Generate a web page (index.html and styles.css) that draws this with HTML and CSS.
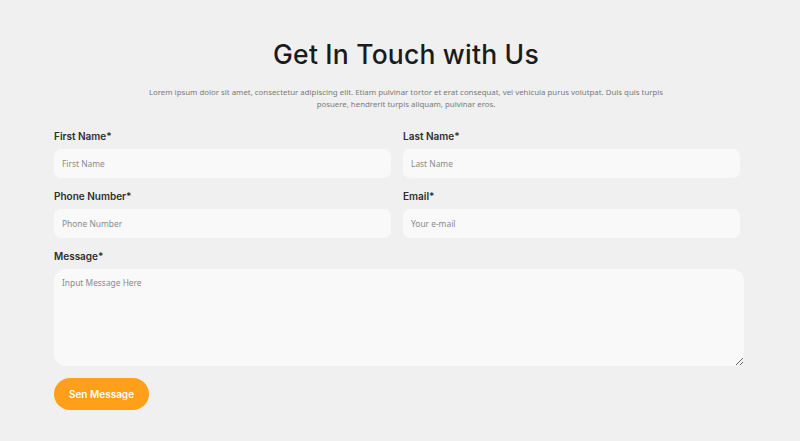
FILE: index.html
```html
<!DOCTYPE html>
<html>
<head>
<meta charset="utf-8">
<link rel="stylesheet" href="styles.css">
</head>
<body>
<section class="contact">
  <header class="head">
    <h1 class="title">Get In Touch with Us</h1>
    <p class="intro">Lorem ipsum dolor sit amet, consectetur adipiscing elit. Etiam pulvinar tortor et erat consequat, vel vehicula purus volutpat. Duis quis turpis posuere, hendrerit turpis aliquam, pulvinar eros.</p>
  </header>
  <form class="form">
    <div class="grid">
      <div class="field">
        <label class="label">First Name*</label>
        <input class="input" type="text" placeholder="First Name">
      </div>
      <div class="field">
        <label class="label">Last Name*</label>
        <input class="input" type="text" placeholder="Last Name">
      </div>
      <div class="field">
        <label class="label">Phone Number*</label>
        <input class="input" type="text" placeholder="Phone Number">
      </div>
      <div class="field">
        <label class="label">Email*</label>
        <input class="input" type="text" placeholder="Your e-mail">
      </div>
    </div>
    <div class="field">
      <label class="label">Message*</label>
      <textarea class="textarea" placeholder="Input Message Here"></textarea>
    </div>
    <button class="btn" type="button">Sen Message</button>
  </form>
</section>
</body>
</html>
```
FILE: styles.css
```css
* { box-sizing: border-box; }
html, body { margin: 0; padding: 0; }
body {
  background: #f0f0f0;
  font-family: "Open Sans", "Liberation Sans", sans-serif;
  width: 800px;
  height: 441px;
  overflow: hidden;
}
.contact {
  padding: 38px 54px 0 54px;
}
.head {
  padding-left: 12px;
}
.title {
  margin: 0;
  text-align: center;
  font-family: Inter, "Liberation Sans", sans-serif;
  font-weight: 500;
  font-size: 26.5px;
  line-height: 32px;
  color: #1b1b1b;
  letter-spacing: 0.2px;
}
.intro {
  margin: 16px auto 0 auto;
  width: 522px;
  text-align: center;
  font-family: "Noto Sans", sans-serif;
  font-size: 7.85px;
  line-height: 12px;
  color: #7a7a7a;
}
.form {
  margin-top: 20px;
}
.grid {
  display: grid;
  grid-template-columns: 337px 337px;
  column-gap: 12px;
  row-gap: 12px;
  margin-bottom: 12px;
}
.field {
  display: flex;
  flex-direction: column;
}
.label {
  font-family: Inter, "Liberation Sans", sans-serif;
  font-weight: 600;
  font-size: 10px;
  line-height: 12px;
  color: #2e2e2e;
  margin-bottom: 7px;
}
.input, .textarea {
  border: none;
  outline: none;
  background: #f9f9f9;
  border-radius: 7px;
  font-family: "Noto Sans", sans-serif;
  font-size: 8.4px;
  color: #333;
  padding: 0 8px;
}
.input { height: 29px; }
.input::placeholder, .textarea::placeholder { color: #8a8a8a; }
.textarea {
  width: 690px;
  height: 97px;
  padding: 8px 8px;
  border-radius: 12px;
  resize: vertical;
}
.btn {
  margin-top: 12px;
  width: 95px;
  height: 32px;
  border: none;
  border-radius: 16px;
  background: #ff9f1a;
  color: #fff;
  font-family: Inter, "Liberation Sans", sans-serif;
  font-weight: 600;
  font-size: 10px;
  cursor: pointer;
}
```
